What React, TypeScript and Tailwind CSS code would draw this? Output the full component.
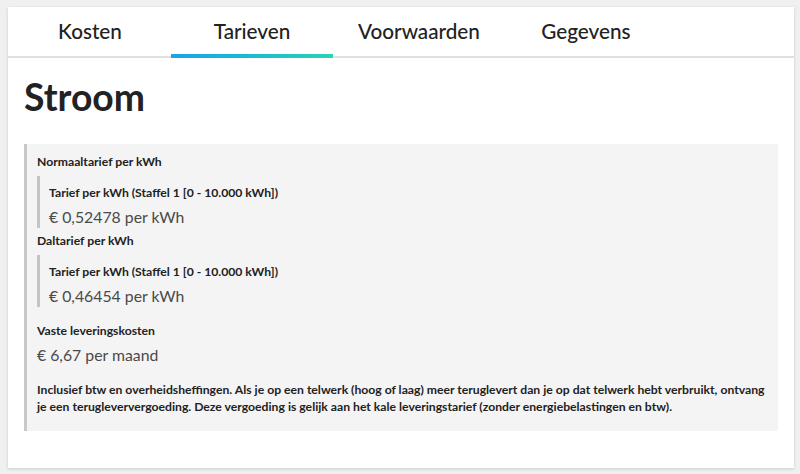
import React from "react";

const tabs = ["Kosten", "Tarieven", "Voorwaarden", "Gegevens"];

function Tier({ label, value }: { label: string; value: string }) {
  return (
    <div className="mt-[5px] border-l-[3px] border-[#c4c4c4] pl-[9px] pt-[8px]">
      <div className="text-[12.2px] leading-[18px] font-bold text-[#222]">{label}</div>
      <div className="mt-[4px] text-[15.8px] leading-[22px] text-[#4a4a4a]">{value}</div>
    </div>
  );
}

export default function App() {
  return (
    <div
      className="min-h-[474px] bg-[#f0f0f0] pt-[7px] pl-[8px] pr-[6px] pb-[6px]"
      style={{ fontFamily: "Lato, 'Noto Sans', sans-serif" }}
    >
      <div className="bg-white shadow-[0_1px_3px_rgba(0,0,0,0.15)] pb-[37px]">
        <nav className="flex border-b-2 border-[#e0e0e0] pl-[1px]">
          {tabs.map((t) => (
            <div
              key={t}
              className="relative min-w-[162px] px-[25px] h-[49px] flex items-center justify-center text-[20.7px] font-medium text-[#222]"
            >
              {t}
              {t === "Tarieven" && (
                <span className="absolute left-0 right-0 bottom-[-2px] h-[4px] bg-gradient-to-r from-[#1ba2ec] to-[#2ad3b2]" />
              )}
            </div>
          ))}
        </nav>

        <div className="px-[16px]">
          <h1 className="mt-[17px] text-[37.3px] leading-[44px] font-bold text-[#222]">Stroom</h1>

          <section className="mt-[25px] bg-[#f4f4f4] border-l-[3px] border-[#c8c8c8] pl-[10px] pr-[8px] pt-[9px] pb-[16px]">
            <div className="text-[12.2px] leading-[18px] font-bold text-[#222]">Normaaltarief per kWh</div>
            <Tier label="Tarief per kWh (Staffel 1 [0 - 10.000 kWh])" value="€ 0,52478 per kWh" />

            <div className="mt-[4px] text-[12.2px] leading-[18px] font-bold text-[#222]">Daltarief per kWh</div>
            <Tier label="Tarief per kWh (Staffel 1 [0 - 10.000 kWh])" value="€ 0,46454 per kWh" />

            <div className="mt-[15px] text-[12.2px] leading-[18px] font-bold text-[#222]">Vaste leveringskosten</div>
            <div className="mt-[4px] text-[15.8px] leading-[22px] text-[#4a4a4a]">€ 6,67 per maand</div>

            <p className="mt-[15px] text-[12.2px] leading-[17px] font-bold text-[#222]">
              Inclusief btw en overheidsheffingen. Als je op een telwerk (hoog of laag) meer teruglevert dan je op dat
              telwerk hebt verbruikt, ontvang je een terugleververgoeding. Deze vergoeding is gelijk aan het kale
              leveringstarief (zonder energiebelastingen en btw).
            </p>
          </section>
        </div>
      </div>
    </div>
  );
}
